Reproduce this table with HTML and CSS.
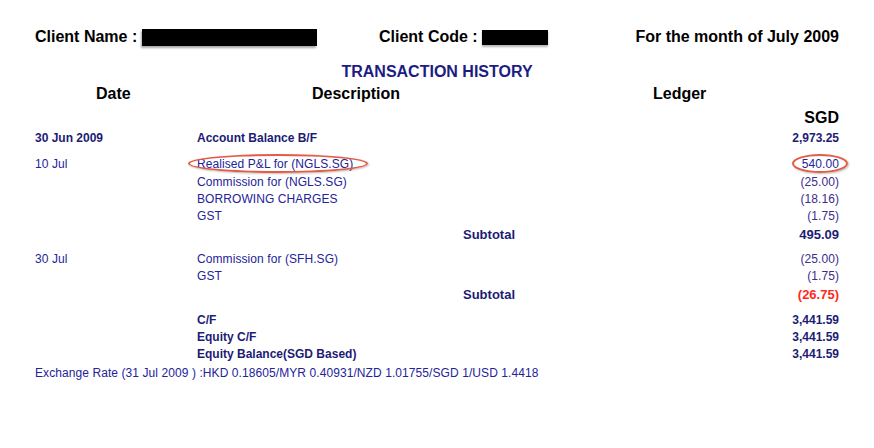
FILE: index.html
```html
<!DOCTYPE html>
<html>
<head>
<meta charset="utf-8">
<link rel="stylesheet" href="styles.css">
</head>
<body>
<div class="page">
  <div class="top">
    <div class="field"><span>Client Name :</span><span class="redact redact-name"></span></div>
    <div class="field"><span>Client Code :</span><span class="redact redact-code"></span></div>
    <div class="month">For the month of July 2009</div>
  </div>
  <div class="title">TRANSACTION HISTORY</div>
  <div class="cols">
    <div class="h-date">Date</div>
    <div class="h-desc">Description</div>
    <div class="h-ledger">Ledger</div>
  </div>
  <div class="ccy">SGD</div>

  <div class="row bold g2">
    <div class="date">30 Jun 2009</div><div class="desc">Account Balance B/F</div><div></div><div class="amt">2,973.25</div>
  </div>
  <div class="row g9">
    <div class="date">10 Jul</div><div class="desc mark">Realised P&amp;L for (NGLS.SG)<span class="oval oval-desc"></span></div><div></div><div class="amt mark">540.00<span class="oval oval-amt"></span></div>
  </div>
  <div class="row g1">
    <div></div><div class="desc">Commission for (NGLS.SG)</div><div></div><div class="amt neg">(25.00)</div>
  </div>
  <div class="row">
    <div></div><div class="desc">BORROWING CHARGES</div><div></div><div class="amt neg">(18.16)</div>
  </div>
  <div class="row">
    <div></div><div class="desc">GST</div><div></div><div class="amt neg">(1.75)</div>
  </div>
  <div class="row sub g1">
    <div></div><div></div><div class="subl">Subtotal</div><div class="amt">495.09</div>
  </div>
  <div class="row g8">
    <div class="date">30 Jul</div><div class="desc">Commission for (SFH.SG)</div><div></div><div class="amt neg">(25.00)</div>
  </div>
  <div class="row">
    <div></div><div class="desc">GST</div><div></div><div class="amt neg">(1.75)</div>
  </div>
  <div class="row sub g1">
    <div></div><div></div><div class="subl">Subtotal</div><div class="amt red">(26.75)</div>
  </div>
  <div class="row bold g9">
    <div></div><div class="desc">C/F</div><div></div><div class="amt">3,441.59</div>
  </div>
  <div class="row bold">
    <div></div><div class="desc">Equity C/F</div><div></div><div class="amt">3,441.59</div>
  </div>
  <div class="row bold">
    <div></div><div class="desc">Equity Balance(SGD Based)</div><div></div><div class="amt">3,441.59</div>
  </div>
  <div class="rate">Exchange Rate (31 Jul 2009 ) :HKD 0.18605/MYR 0.40931/NZD 1.01755/SGD 1/USD 1.4418</div>
</div>
</body>
</html>
```
FILE: styles.css
```css
html, body {
  margin: 0;
  padding: 0;
  background: #ffffff;
}
.page {
  width: 804px;
  padding: 27px 35px 0 35px;
  font-family: "Liberation Sans", Arial, sans-serif;
  color: #000;
}
.top {
  display: grid;
  grid-template-columns: 344px auto 1fr;
  font-size: 16px;
  font-weight: bold;
  line-height: 20px;
}
.field {
  display: flex;
  align-items: center;
}
.redact {
  display: inline-block;
  background: #000;
}
.redact-name {
  width: 175px;
  height: 17px;
  margin-left: 5px;
  box-shadow: -1px 2px 2px rgba(0,0,0,0.35);
}
.redact-code {
  width: 66px;
  height: 15px;
  margin-left: 4px;
  box-shadow: 0 2px 2px rgba(0,0,0,0.3);
}
.month {
  text-align: right;
}
.title {
  margin-top: 15px;
  text-align: center;
  font-size: 16px;
  font-weight: bold;
  line-height: 20px;
  color: #1c1c84;
}
.cols {
  margin-top: 2px;
  display: grid;
  grid-template-columns: 162px 266px 1fr;
  font-size: 16px;
  font-weight: bold;
  line-height: 20px;
}
.h-date { padding-left: 61px; }
.h-desc { padding-left: 115px; }
.h-ledger { padding-left: 190px; }
.ccy {
  margin-top: 4px;
  text-align: right;
  font-size: 16px;
  font-weight: bold;
  line-height: 20px;
}
.row {
  display: grid;
  grid-template-columns: 162px 266px 1fr auto;
  font-size: 12px;
  line-height: 17px;
  height: 17px;
  color: #23239a;
  letter-spacing: 0.08px;
}
.row.bold {
  font-weight: bold;
  color: #1c1c74;
  letter-spacing: 0;
}
.row.sub {
  font-size: 13px;
  font-weight: bold;
  color: #1c1c74;
  letter-spacing: 0;
}
.amt {
  text-align: right;
  white-space: nowrap;
}
.neg {
  color: #3b2e8c;
}
.red {
  color: #ff2a1a;
}
.g1 { margin-top: 1px; }
.g2 { margin-top: 2px; }
.g8 { margin-top: 8px; }
.g9 { margin-top: 9px; }
.mark {
  position: relative;
}
.oval {
  position: absolute;
  border: 2.5px solid #e25c46;
  border-radius: 50%;
  box-shadow: 1px 1px 2px rgba(0,0,0,0.25);
  box-sizing: border-box;
}
.oval-desc {
  left: -9px;
  top: -2px;
  width: 180px;
  height: 19px;
}
.oval-amt {
  right: -9px;
  top: -2px;
  width: 56px;
  height: 19px;
}
.rate {
  margin-top: 2px;
  font-size: 12px;
  line-height: 17px;
  color: #23239a;
  letter-spacing: 0.08px;
}
```
